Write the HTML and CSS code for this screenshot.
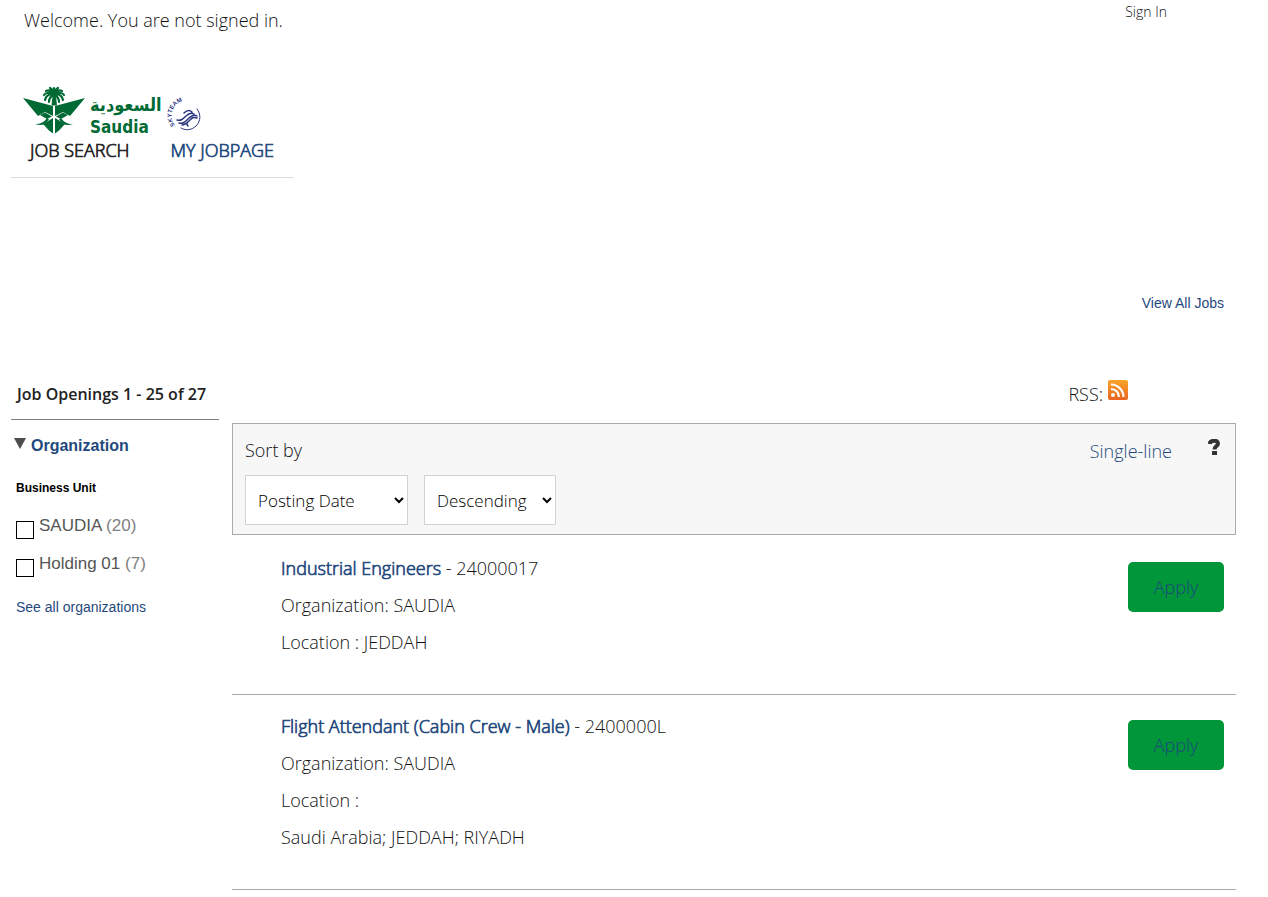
FILE: index.html
```html
<!DOCTYPE html>
<html lang="en">
<head>
  <meta charset="UTF-8">
  <meta name="viewport" content="width=device-width, initial-scale=1">
  <title>Job Search</title>
  <link rel="stylesheet" href="styles.css">
</head>
<body>

  <header>
    <div class="top-bar">
      <p class="welcome">Welcome. You are not signed in.</p>
      <a class="sign-in" href="#">Sign In</a>
    </div>

    <div class="brand">
      <svg class="logo" width="182" height="52" viewBox="0 0 182 52" role="img" aria-label="Saudia, SkyTeam">
        <!-- palm and swords -->
        <g fill="#006a35">
          <path d="M0 14l30 8v10l-8-4-7 4z"/>
          <path d="M62 14l-30 8v10l8-4 7 4z"/>
          <path d="M17 31l5-2.500 7 4-5 2.500z"/>
          <path d="M45 31l-5-2.500-7 4 5 2.500z"/>
          <path d="M20 40l10-6v15.500l-4-3z"/>
          <path d="M42 40l-10-6v15.500l4-3z"/>
          <path d="M12 40c6 0 9-2 12-6l2 1.500c-4 5-7 7-14 4.500z"/>
          <path d="M50 40c-6 0-9-2-12-6l-2 1.500c4 5 7 7 14 4.500z"/>
          <path d="M29.500 12h3.500l1 9.500h-5.500z"/>
        </g>
        <g fill="none" stroke="#006a35" stroke-width="2.200" stroke-linecap="round">
          <path d="M31 11c-3-2-8 0-9 5M31 10c-5-2-9-1-10 1M31 10c-3-4-6-4-8-3M31 10c-1-4-2-5-4-6M31 10V4M31 11c3-2 8 0 9 5M31 10c5-2 9-1 10 1M31 10c3-4 6-4 8-3M31 10c1-4 2-5 4-6M30 11c-3 2-4 4-4 7M32 11c3 2 4 4 4 7"/>
        </g>
        <text class="logo-arabic" x="67" y="27" direction="ltr">السعودية</text>
        <text class="logo-latin" x="67" y="49">Saudia</text>

        <!-- skyteam -->
        <path id="ring" d="M152 41a13 13 0 0 1 22-19" fill="none"/>
        <text class="logo-skyteam"><textPath href="#ring">SKYTEAM</textPath></text>
        <g fill="none" stroke="#29347f" stroke-linecap="round">
          <path d="M174 25c4 5 4 12-1 17-4 4-10 5-15 2" stroke-width="1"/>
          <path d="M154 36c4 1 6-1 9-4s5-4 8-2M156 39c4 1 6-1 9-4s6-5 9-3M159 41c3 0 5-2 7-4M161 29c3-3 6-3 8-1M165 42c-2-2-1-4 2-6 3-3 4-3 7-2" stroke-width="1.500"/>
        </g>
      </svg>
      <nav>
        <a class="current" href="#">JOB SEARCH</a>
        <a href="#">MY JOBPAGE</a>
      </nav>
    </div>
  </header>

  <div class="view-all"><a href="#">View All Jobs</a></div>

  <div class="results-head">
    <h1>Job Openings 1 - 25 of 27</h1>
    <a class="rss" href="#">
      RSS:
      <svg width="20" height="20" viewBox="0 0 20 20" aria-hidden="true">
        <defs>
          <linearGradient id="rss-fill" x1="0" y1="0" x2="0" y2="1">
            <stop offset="0" stop-color="#f9a52b"/>
            <stop offset="1" stop-color="#ea6420"/>
          </linearGradient>
        </defs>
        <rect width="20" height="20" rx="2" fill="url(#rss-fill)"/>
        <circle cx="5" cy="15" r="2" fill="#fff"/>
        <path d="M3 9a8 8 0 0 1 8 8M3 4.500a12.500 12.500 0 0 1 12.500 12.500" fill="none" stroke="#fff" stroke-width="2.200"/>
      </svg>
    </a>
  </div>

  <div class="columns">
    <aside>
      <h2>
        <svg width="12" height="11" viewBox="0 0 12 11" aria-hidden="true"><path d="M0 0h12L6 11z" fill="#4d4d4d"/></svg>
        <a href="#">Organization</a>
      </h2>
      <h3>Business Unit</h3>
      <div class="filter">
        <input type="checkbox" id="unit-saudia">
        <label for="unit-saudia">SAUDIA <span>(20)</span></label>
      </div>
      <div class="filter">
        <input type="checkbox" id="unit-holding">
        <label for="unit-holding">Holding 01 <span>(7)</span></label>
      </div>
      <a class="see-all" href="#">See all organizations</a>
    </aside>

    <main>
      <form class="sort-bar">
        <div class="sort">
          <label for="sort-field">Sort by</label>
          <div class="selects">
            <select id="sort-field" class="sort-field">
              <option>Posting Date</option>
              <option>Job Title</option>
            </select>
            <select class="sort-order" aria-label="Sort order">
              <option>Descending</option>
              <option>Ascending</option>
            </select>
          </div>
        </div>
        <div class="tools">
          <a href="#">Single-line</a>
          <a href="#" aria-label="Help">
            <svg width="12" height="16" viewBox="0 0 12 16" aria-hidden="true">
              <path d="M1.500 5C2 1 10 .5 10 4.500 10 7 6.500 7 6.500 10.500" fill="none" stroke="#333" stroke-width="4"/>
              <path d="M4 12h5v4H4z" fill="#333"/>
            </svg>
          </a>
        </div>
      </form>

      <ul class="jobs">
        <li>
          <div>
            <h4><a href="#">Industrial Engineers</a> - 24000017</h4>
            <p>Organization: SAUDIA</p>
            <p>Location : JEDDAH</p>
          </div>
          <button type="button">Apply</button>
        </li>
        <li>
          <div>
            <h4><a href="#">Flight Attendant (Cabin Crew - Male)</a> - 2400000L</h4>
            <p>Organization: SAUDIA</p>
            <p>Location :</p>
            <p>Saudi Arabia; JEDDAH; RIYADH</p>
          </div>
          <button type="button">Apply</button>
        </li>
      </ul>
    </main>
  </div>

</body>
</html>
```
FILE: styles.css
```css
* {
  box-sizing: border-box;
}

body {
  margin: 0;
  padding: 0 32px 0 11px;
  background: #fff;
  color: #111;
  font-family: "Open Sans", sans-serif;
  font-size: 18px;
  font-weight: 300;
}

h1, h2, h3, h4, p, ul {
  margin: 0;
  padding: 0;
}

a {
  color: #1f497d;
  text-decoration: none;
}

svg {
  display: block;
}

/* header */

.top-bar {
  display: flex;
  justify-content: space-between;
  align-items: flex-start;
  height: 84px;
  padding: 0 69px 0 13px;
}

.welcome {
  line-height: 40px;
}

.sign-in {
  color: #111;
  font-size: 14px;
  line-height: 24px;
}

.brand {
  width: 283px;
  border-bottom: 1px solid #ddd;
}

.logo {
  margin-left: 12px;
}

.logo-arabic,
.logo-latin {
  fill: #006a35;
  font-family: "DejaVu Sans Condensed", "DejaVu Sans", sans-serif;
  font-weight: bold;
}

.logo-arabic {
  font-size: 18px;
}

.logo-latin {
  font-size: 17px;
}

.logo-skyteam {
  fill: #29347f;
  font-family: "Liberation Sans", sans-serif;
  font-size: 6px;
  font-weight: bold;
}

nav {
  display: flex;
  gap: 41px;
  padding: 0 0 12px 19px;
  line-height: 29px;
}

/* light face, thickened slightly */
nav a,
h4 a {
  -webkit-text-stroke: 0.7px;
}

nav .current {
  color: #222;
}

.view-all {
  padding: 115px 12px 0 0;
  font-family: "Liberation Sans", Arial, sans-serif;
  font-size: 14px;
  font-weight: 400;
  line-height: 20px;
  text-align: right;
}

/* results heading */

.results-head {
  display: flex;
  justify-content: space-between;
  align-items: center;
  margin-top: 66px;
  padding: 0 108px 0 6px;
  line-height: 30px;
}

h1 {
  color: #222;
  font-size: 16px;
  font-weight: 600;
}

.rss {
  display: flex;
  gap: 5px;
  color: #111;
  line-height: 28px;
}

/* columns */

.columns {
  display: grid;
  grid-template-columns: 208px 1fr;
  gap: 13px;
  margin-top: 10px;
}

aside {
  align-self: start;
  border-top: 1px solid #808080;
  font-family: "Liberation Sans", Arial, sans-serif;
  font-weight: 400;
}

h2 {
  display: flex;
  gap: 5px;
  padding: 16px 0 0 3px;
  font-size: 16px;
  line-height: 20px;
}

h2 svg {
  margin-top: 2px;
}

h3 {
  padding: 22px 0 0 5px;
  color: #000;
  font-size: 12px;
  line-height: 20px;
}

.filter {
  display: flex;
  gap: 5px;
  margin: 15px 0 0 5px;
  color: #555;
  font-size: 17px;
  line-height: 20px;
}

h3 + .filter {
  margin-top: 18px;
}

.filter input {
  appearance: none;
  width: 18px;
  height: 18px;
  margin: 5px 0 0;
  border: 1px solid #000;
  background: #fff;
}

.filter input:checked {
  background: #1f497d;
}

.filter span {
  color: #808080;
}

.see-all {
  display: block;
  margin: 20px 0 0 5px;
  font-size: 14px;
  line-height: 20px;
}

main {
  margin-top: 4px;
}

.sort-bar {
  display: flex;
  justify-content: space-between;
  padding: 11px 15px 9px 12px;
  border: 1px solid #aaa;
  background: #f7f7f7;
}

.sort label {
  display: block;
  line-height: 30px;
}

.selects {
  display: flex;
  gap: 16px;
  margin-top: 10px;
}

select {
  height: 50px;
  padding: 0 3px 0 8px;
  border: 1px solid #d3d3d3;
  border-radius: 0;
  background: #fff;
  color: #000;
  font-family: inherit;
  font-size: 17px;
  font-weight: 300;
}

.sort-field {
  width: 163px;
}

.sort-order {
  width: 132px;
}

.tools {
  display: flex;
  gap: 36px;
  line-height: 32px;
}

.tools svg {
  margin-top: 4px;
}

/* job list */

.jobs {
  padding-top: 2px;
  list-style: none;
}

.jobs li {
  display: flex;
  justify-content: space-between;
  align-items: flex-start;
  padding: 13px 12px 33px 49px;
  border-bottom: 1px solid #aaa;
  line-height: 37px;
}

h4 {
  font-size: 18px;
  font-weight: 300;
}

button {
  width: 96px;
  height: 50px;
  margin-top: 12px;
  border: none;
  border-radius: 5px;
  background: #009639;
  color: #1f497d;
  font-family: inherit;
  font-size: 18px;
  font-weight: 300;
  cursor: pointer;
}
```
